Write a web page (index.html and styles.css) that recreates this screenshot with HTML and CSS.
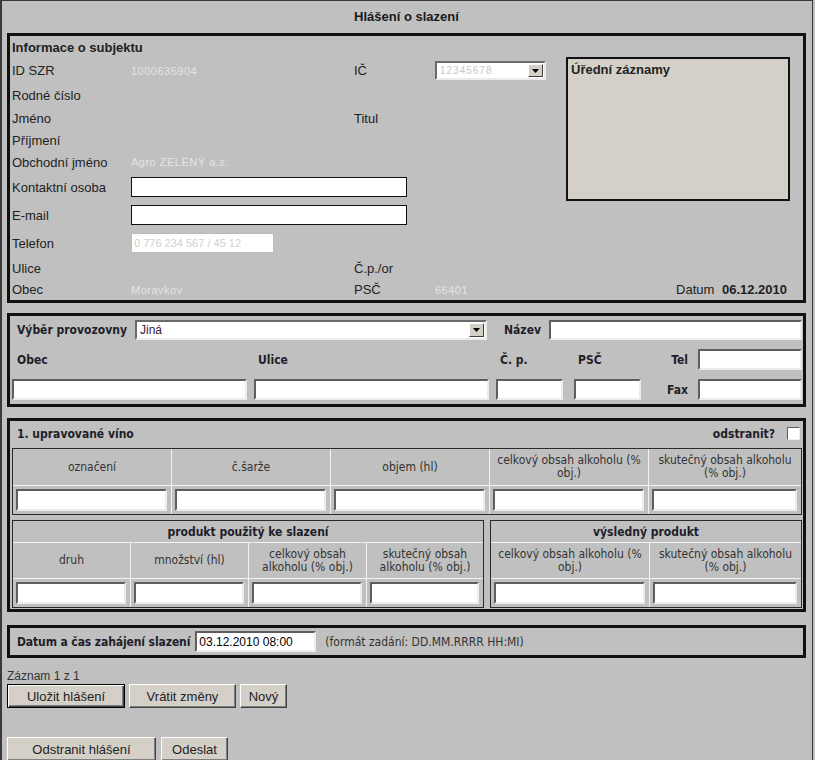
FILE: index.html
```html
<!DOCTYPE html>
<html lang="cs">
<head>
<meta charset="utf-8">
<title>Hlášení o slazení</title>
<link rel="stylesheet" href="styles.css">
</head>
<body>
<div class="frame">
  <div class="page-title">Hlášení o slazení</div>

  <section class="box subject">
    <div class="sub-top">
      <div class="sub-left">
        <div class="row h22"><b class="sec-title">Informace o subjektu</b></div>
        <div class="row h25">
          <span class="c1">ID SZR</span><span class="c2 blur">1000635904</span>
          <span class="c3">IČ</span>
          <span class="c4">
            <span class="select sel-ic"><span class="txt blur-dark">12345678</span><span class="arrow"><svg width="7" height="4" viewBox="0 0 7 4"><path d="M0 0h7L3.5 4z" fill="#000"/></svg></span></span>
          </span>
        </div>
        <div class="row h24"><span class="c1">Rodné číslo</span></div>
        <div class="row h22"><span class="c1">Jméno</span><span class="c2"></span><span class="c3">Titul</span></div>
        <div class="row h22"><span class="c1">Příjmení</span></div>
        <div class="row h22"><span class="c1">Obchodní jméno</span><span class="c2 blur">Agro ZELENÝ a.s.</span></div>
        <div class="row h28"><span class="c1">Kontaktní osoba</span><input class="inp-solid w276" type="text"></div>
        <div class="row h28"><span class="c1">E-mail</span><input class="inp-solid w276" type="text"></div>
        <div class="row h28"><span class="c1">Telefon</span><input class="inp-light w143" type="text" value="0 776 234 567 / 45 12"></div>
      </div>
      <div class="uredni">Úřední záznamy</div>
    </div>
    <div class="row h22"><span class="c1">Ulice</span><span class="c2"></span><span class="c3">Č.p./or</span></div>
    <div class="row h21">
      <span class="c1">Obec</span><span class="c2 blur">Moravkov</span>
      <span class="c3">PSČ</span><span class="c4 blur">66401</span>
      <span class="c5">Datum <b class="datum-val">06.12.2010</b></span>
    </div>
  </section>

  <section class="box provoz">
    <div class="p-row1">
      <span class="p-lab1">Výběr provozovny</span>
      <span class="select sel-prov"><span class="txt">Jiná</span><span class="arrow"><svg width="7" height="4" viewBox="0 0 7 4"><path d="M0 0h7L3.5 4z" fill="#000"/></svg></span></span>
      <span class="p-lab-nazev">Název</span>
      <input class="inp w253" type="text">
    </div>
    <div class="p-grid">
      <span class="lab">Obec</span>
      <span class="lab">Ulice</span>
      <span class="lab">Č. p.</span>
      <span class="lab">PSČ</span>
      <span class="lab lab-r">Tel</span>
      <input class="inp w104" type="text">
      <input class="inp w235" type="text">
      <input class="inp w235" type="text">
      <input class="inp w67" type="text">
      <input class="inp w67" type="text">
      <span class="lab lab-r">Fax</span>
      <input class="inp w104" type="text">
    </div>
  </section>

  <section class="box vino">
    <div class="v-title">
      <b class="tb">1. upravované víno</b>
      <span class="odstranit"><b class="tb">odstranit?</b><span class="chk"></span></span>
    </div>
    <div class="tbl t1">
      <div class="th">označení</div>
      <div class="th">č.šarže</div>
      <div class="th">objem (hl)</div>
      <div class="th">celkový obsah alkoholu (% obj.)</div>
      <div class="th">skutečný obsah alkoholu (% obj.)</div>
      <div class="td"><input class="inp cell-inp" type="text"></div>
      <div class="td"><input class="inp cell-inp" type="text"></div>
      <div class="td"><input class="inp cell-inp" type="text"></div>
      <div class="td"><input class="inp cell-inp" type="text"></div>
      <div class="td"><input class="inp cell-inp" type="text"></div>
    </div>
    <div class="tbl-pair">
      <div class="tbl t2">
        <div class="tcap">produkt použitý ke slazení</div>
        <div class="th">druh</div>
        <div class="th">množství (hl)</div>
        <div class="th">celkový obsah alkoholu (% obj.)</div>
        <div class="th">skutečný obsah alkoholu (% obj.)</div>
        <div class="td"><input class="inp cell-inp" type="text"></div>
        <div class="td"><input class="inp cell-inp" type="text"></div>
        <div class="td"><input class="inp cell-inp" type="text"></div>
        <div class="td"><input class="inp cell-inp" type="text"></div>
      </div>
      <div class="tbl t3">
        <div class="tcap">výsledný produkt</div>
        <div class="th">celkový obsah alkoholu (% obj.)</div>
        <div class="th">skutečný obsah alkoholu (% obj.)</div>
        <div class="td"><input class="inp cell-inp" type="text"></div>
        <div class="td"><input class="inp cell-inp" type="text"></div>
      </div>
    </div>
  </section>

  <section class="box datum">
    <b class="tb d-lab">Datum a čas zahájení slazení</b>
    <input class="inp w121 d-inp" type="text" value="03.12.2010 08:00">
    <span class="d-hint">(formát zadání: DD.MM.RRRR HH:MI)</span>
  </section>

  <div class="zaznam">Záznam 1 z 1</div>
  <div class="btn-row">
    <button class="btn btn-default w118" type="button">Uložit hlášení</button>
    <button class="btn w107" type="button">Vrátit změny</button>
    <button class="btn w47" type="button">Nový</button>
  </div>
  <div class="btn-row btn-row2">
    <button class="btn w149" type="button">Odstranit hlášení</button>
    <button class="btn w67b" type="button">Odeslat</button>
  </div>
</div>
</body>
</html>
```

FILE: styles.css
```css
html, body {
  margin: 0;
  padding: 0;
  background: #c0c0c0;
}
body {
  font-family: "Liberation Sans", Arial, sans-serif;
  font-size: 13px;
  color: #222;
  overflow: hidden;
}
.frame {
  box-sizing: border-box;
  width: 813px;
  min-height: 780px;
  border-left: 2px solid #3a3a3a;
  border-top: 1px solid #3a3a3a;
  border-right: 1px solid #3a3a3a;
  padding: 0 6px 0 5px;
}
.page-title {
  height: 32px;
  line-height: 32px;
  text-align: center;
  font-weight: bold;
  font-size: 13px;
  color: #1a1a1a;
}
.box {
  box-sizing: border-box;
  width: 799px;
  border: 3px solid #111;
}

/* subject */
.subject {
  padding-left: 2px;
  height: 270px;
}
.sub-top { display: flex; }
.sub-left { width: 554px; }
.row { display: flex; align-items: center; }
.h21 { height: 21px; }
.h22 { height: 22px; }
.h24 { height: 24px; }
.h25 { height: 25px; }
.h28 { height: 28px; }
.sec-title { font-weight: bold; }
.c1 { width: 119px; flex: none; }
.c2 { width: 223px; flex: none; }
.c3 { width: 81px; flex: none; }
.c4 { width: 131px; flex: none; display: flex; }
.c5 { flex: 1; text-align: right; padding-right: 16px; }
.datum-val { margin-left: 4px; }
.blur {
  color: #e4e4e4;
  font-size: 11px;
  letter-spacing: 0.5px;
}
.blur-dark { color: #c8c8c8; font-size: 10px; letter-spacing: 1px; }
.uredni {
  box-sizing: border-box;
  margin-top: 21px;
  width: 224px;
  height: 144px;
  border: 2px solid #111;
  background: #d4d0c8;
  padding: 3px 3px;
  font-weight: bold;
  line-height: 15px;
}
.inp-solid {
  box-sizing: border-box;
  height: 20px;
  border: 1px solid #111;
  background: #fff;
  margin: 0;
  padding: 0 2px;
}
.inp-light {
  box-sizing: border-box;
  height: 20px;
  border: 1px solid #bbb;
  background: #fff;
  margin: 0;
  padding: 0 2px;
  color: #d0d0d0;
  font-family: "Liberation Sans", Arial, sans-serif;
  font-size: 11px;
}
.w276 { width: 276px; }
.w143 { width: 143px; }

/* select */
.select {
  box-sizing: border-box;
  display: flex;
  align-items: center;
  background: #fff;
  border-style: solid;
  border-width: 2px;
  border-color: #6a6a6a #ececec #ececec #6a6a6a;
}
.select .txt {
  flex: 1;
  padding-left: 3px;
  white-space: nowrap;
  overflow: hidden;
}
.select .arrow {
  box-sizing: border-box;
  width: 15px;
  height: calc(100% - 2px);
  margin-right: 1px;
  background: #d4d0c8;
  border: 1px solid;
  border-color: #fff #404040 #404040 #fff;
  display: flex;
  align-items: center;
  justify-content: center;
}
.sel-ic { width: 111px; height: 19px; }
.sel-prov {
  width: 352px;
  height: 20px;
  font-size: 12px;
  color: #3a203a;
}

/* generic input */
.inp {
  box-sizing: border-box;
  margin: 0;
  padding: 0 2px;
  background: #fff;
  border-style: solid;
  border-width: 2px;
  border-color: #5e5e5e #ececec #ececec #5e5e5e;
  font-family: "Liberation Sans", Arial, sans-serif;
  font-size: 12px;
  color: #000;
}
.tb {
  font-family: "DejaVu Sans Condensed", "DejaVu Sans", sans-serif;
  font-weight: bold;
  font-size: 12px;
  color: #1e1e2a;
}

/* provozovna */
.provoz {
  margin-top: 10px;
  padding: 4px 0 4px 0;
}
.p-row1 {
  display: flex;
  align-items: center;
  height: 20px;
}
.p-lab1, .p-lab-nazev, .lab {
  font-family: "DejaVu Sans Condensed", "DejaVu Sans", sans-serif;
  font-weight: bold;
  font-size: 12px;
  color: #1e1e2a;
}
.p-lab1 {
  box-sizing: border-box;
  width: 125px;
  padding-left: 7px;
  white-space: nowrap;
}
.p-lab-nazev {
  box-sizing: border-box;
  width: 62px;
  text-align: right;
  padding-right: 8px;
}
.w253 { width: 253px; height: 20px; }
.p-grid {
  margin-top: 9px;
  padding-left: 2px;
  display: grid;
  grid-template-columns: 242px 242px 78px 67px 57px 104px;
  grid-template-rows: 21px 21px;
  row-gap: 9px;
  align-items: center;
}
.lab { padding-left: 4px; }
.p-grid > .lab:first-child { padding-left: 5px; }
.lab-r { text-align: right; padding-right: 10px; padding-left: 0; }
.w235 { width: 235px; height: 21px; }
.w67 { width: 67px; height: 21px; }
.w104 { width: 104px; height: 21px; }

/* víno */
.vino {
  margin-top: 11px;
  padding: 0 1px 1px 2px;
}
.v-title {
  height: 25px;
  margin-bottom: 2px;
  display: flex;
  align-items: center;
  justify-content: space-between;
  padding-left: 5px;
}
.odstranit {
  display: flex;
  align-items: center;
}
.chk {
  box-sizing: border-box;
  width: 13px;
  height: 13px;
  margin-left: 12px;
  margin-right: 2px;
  background: #fff;
  border-style: solid;
  border-width: 1px;
  border-color: #5e5e5e #ececec #ececec #5e5e5e;
}
.tbl {
  box-sizing: border-box;
  display: grid;
  border: 1px solid #2a2a2a;
}
.th {
  display: flex;
  align-items: center;
  justify-content: center;
  text-align: center;
  padding: 0 4px;
  font-family: "DejaVu Sans Condensed", "DejaVu Sans", sans-serif;
  font-size: 12px;
  line-height: 13px;
  color: #333;
}
.td {
  display: flex;
  align-items: center;
  border-top: 1px solid #f2f2f2;
}
.tcap {
  grid-column: 1 / -1;
  display: flex;
  align-items: center;
  justify-content: center;
  font-family: "DejaVu Sans Condensed", "DejaVu Sans", sans-serif;
  font-weight: bold;
  font-size: 12px;
  color: #1e1e2a;
}
.cell-inp {
  width: calc(100% - 7px);
  height: 22px;
  margin-left: 3px;
}
.t1 {
  width: 790px;
  grid-template-columns: 158px 159px 159px 159px 153px;
  grid-template-rows: 36px 29px;
}
.t1 > :not(:nth-child(5n+1)) { border-left: 1px solid #f2f2f2; }
.tbl-pair {
  display: flex;
  gap: 6px;
  margin-top: 5px;
}
.t2 {
  width: 472px;
  grid-template-columns: 117px 118px 118px 117px;
  grid-template-rows: 21px 36px 29px;
}
.t2 > .th, .t3 > .th { border-top: 1px solid #f2f2f2; }
.t2 > .th:not(:nth-child(2)),
.t2 > .td:not(:nth-child(6)) { border-left: 1px solid #f2f2f2; }
.t3 {
  width: 312px;
  grid-template-columns: 158px 152px;
  grid-template-rows: 21px 36px 29px;
}
.t3 > .th:nth-child(3),
.t3 > .td:nth-child(5) { border-left: 1px solid #f2f2f2; }

/* datum */
.datum {
  margin-top: 13px;
  height: 33px;
  display: flex;
  align-items: center;
  padding-left: 7px;
}
.d-lab { letter-spacing: -0.1px; }
.d-inp { margin-left: 5px; }
.w121 { width: 121px; height: 21px; }
.d-hint {
  margin-left: 9px;
  font-family: "DejaVu Sans Condensed", "DejaVu Sans", sans-serif;
  font-size: 12px;
  color: #333;
}

/* bottom */
.zaznam {
  margin-top: 10px;
  height: 16px;
  line-height: 16px;
  font-size: 12px;
  color: #333;
}
.btn-row {
  display: flex;
  gap: 4px;
}
.btn-row2 { margin-top: 29px; gap: 5px; }
.btn {
  box-sizing: border-box;
  height: 24px;
  margin: 0;
  padding: 0;
  background: #d4d0c8;
  border: 1px solid;
  border-color: #fff #404040 #404040 #fff;
  box-shadow: inset -1px -1px 0 #808080;
  font-family: "Liberation Sans", Arial, sans-serif;
  font-size: 13px;
  color: #222;
}
.btn-default {
  border: 1px solid #000;
  box-shadow: inset 1px 1px 0 #fff, inset -1px -1px 0 #404040, inset -2px -2px 0 #808080;
}
.w118 { width: 118px; }
.w107 { width: 107px; }
.w47 { width: 47px; }
.w149 { width: 149px; }
.w67b { width: 67px; }
```
